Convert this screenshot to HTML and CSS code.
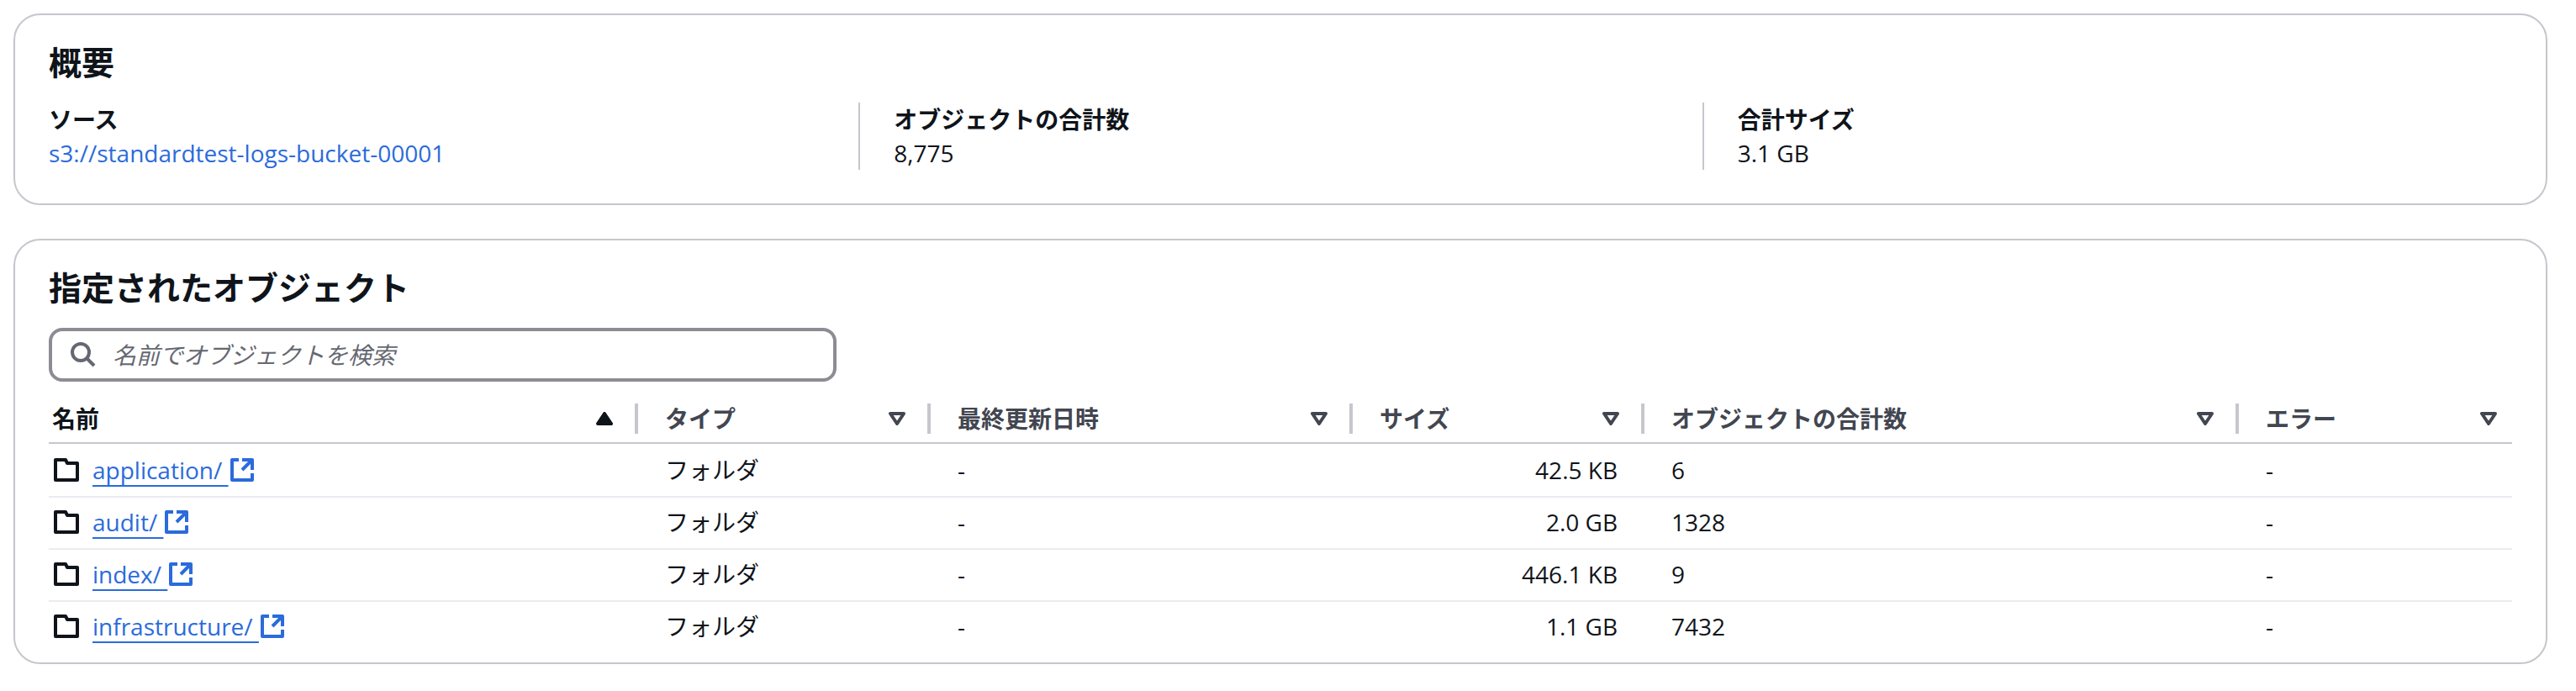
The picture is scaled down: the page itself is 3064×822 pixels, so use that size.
FILE: index.html
```html
<!DOCTYPE html>
<html lang="ja">
<head>
    <meta charset="UTF-8">
    <meta name="viewport" content="width=device-width, initial-scale=1.0">
    <title>概要</title>
    <link rel="stylesheet" href="styles.css">
</head>
<body>
    <!-- Shared icons -->
    <svg class="sprite" aria-hidden="true">
        <symbol id="icon-folder" viewBox="0 0 30 28">
            <path d="M2 2h12l2 4h12v20H2z" fill="none" stroke="currentColor" stroke-width="4" stroke-linejoin="round"/>
        </symbol>
        <symbol id="icon-external" viewBox="0 0 28 28">
            <path d="M10 2H2v24h24v-8M14 2h12v12M26 2L14 14" fill="none" stroke="currentColor" stroke-width="4" stroke-linejoin="round"/>
        </symbol>
        <symbol id="icon-sort" viewBox="0 0 20 16">
            <path d="M2 2h16l-8 12z" fill="none" stroke="currentColor" stroke-width="4" stroke-linejoin="round"/>
        </symbol>
        <symbol id="icon-sorted" viewBox="0 0 20 16">
            <path d="M10 2l8 12H2z" fill="currentColor" stroke="currentColor" stroke-width="4" stroke-linejoin="round"/>
        </symbol>
    </svg>

    <section class="card">
        <h2>概要</h2>
        <dl class="summary">
            <div class="summary-item">
                <dt>ソース</dt>
                <dd><a href="#">s3://standardtest-logs-bucket-00001</a></dd>
            </div>
            <div class="summary-item">
                <dt>オブジェクトの合計数</dt>
                <dd>8,775</dd>
            </div>
            <div class="summary-item">
                <dt>合計サイズ</dt>
                <dd>3.1 GB</dd>
            </div>
        </dl>
    </section>

    <section class="card objects">
        <h2>指定されたオブジェクト</h2>
        <label class="search">
            <svg class="search-icon" viewBox="0 0 30 30" aria-hidden="true">
                <circle cx="12" cy="12" r="10" fill="none" stroke="currentColor" stroke-width="4"/>
                <path d="M19 19l9 9" stroke="currentColor" stroke-width="4"/>
            </svg>
            <input type="text" placeholder="名前でオブジェクトを検索" aria-label="名前でオブジェクトを検索">
        </label>

        <table>
            <colgroup>
                <col class="col-name">
                <col class="col-type">
                <col class="col-modified">
                <col class="col-size">
                <col class="col-count">
                <col class="col-error">
            </colgroup>
            <thead>
                <tr>
                    <th aria-sort="ascending"><div class="head"><button class="sorted">名前<svg class="sort"><use href="#icon-sorted"/></svg></button></div></th>
                    <th><div class="head"><button>タイプ<svg class="sort"><use href="#icon-sort"/></svg></button></div></th>
                    <th><div class="head"><button>最終更新日時<svg class="sort"><use href="#icon-sort"/></svg></button></div></th>
                    <th><div class="head"><button>サイズ<svg class="sort"><use href="#icon-sort"/></svg></button></div></th>
                    <th><div class="head"><button>オブジェクトの合計数<svg class="sort"><use href="#icon-sort"/></svg></button></div></th>
                    <th><div class="head"><button>エラー<svg class="sort"><use href="#icon-sort"/></svg></button></div></th>
                </tr>
            </thead>
            <tbody>
                <tr>
                    <td><div class="name"><svg class="folder"><use href="#icon-folder"/></svg><a href="#"><span>application/&nbsp;</span><svg class="external"><use href="#icon-external"/></svg></a></div></td>
                    <td>フォルダ</td>
                    <td>-</td>
                    <td class="size">42.5 KB</td>
                    <td>6</td>
                    <td>-</td>
                </tr>
                <tr>
                    <td><div class="name"><svg class="folder"><use href="#icon-folder"/></svg><a href="#"><span>audit/&nbsp;</span><svg class="external"><use href="#icon-external"/></svg></a></div></td>
                    <td>フォルダ</td>
                    <td>-</td>
                    <td class="size">2.0 GB</td>
                    <td>1328</td>
                    <td>-</td>
                </tr>
                <tr>
                    <td><div class="name"><svg class="folder"><use href="#icon-folder"/></svg><a href="#"><span>index/&nbsp;</span><svg class="external"><use href="#icon-external"/></svg></a></div></td>
                    <td>フォルダ</td>
                    <td>-</td>
                    <td class="size">446.1 KB</td>
                    <td>9</td>
                    <td>-</td>
                </tr>
                <tr>
                    <td><div class="name"><svg class="folder"><use href="#icon-folder"/></svg><a href="#"><span>infrastructure/&nbsp;</span><svg class="external"><use href="#icon-external"/></svg></a></div></td>
                    <td>フォルダ</td>
                    <td>-</td>
                    <td class="size">1.1 GB</td>
                    <td>7432</td>
                    <td>-</td>
                </tr>
            </tbody>
        </table>
    </section>
</body>
</html>
```
FILE: styles.css
```css
* {
    box-sizing: border-box;
}
body {
    margin: 0;
    padding: 16px 34px 32px 16px;
    font-family: "Open Sans", "Noto Sans CJK JP", sans-serif;
    font-size: 28px;
    line-height: 40px;
    color: #0f141a;
    background: #fff;
}
.sprite {
    display: none;
}
a {
    color: #2b6bdb;
    text-decoration: none;
}
.card {
    padding: 32px 40px 40px;
    border: 2px solid #c6c6cd;
    border-radius: 32px;
    margin-bottom: 40px;
}
.objects {
    padding-bottom: 10px;
    margin-bottom: 0;
}
h2 {
    margin: 0 0 24px;
    font-size: 39px;
    line-height: 48px;
    font-weight: 700;
}

/* Summary */
.summary {
    display: grid;
    grid-template-columns: repeat(3, 1fr);
    gap: 80px;
    margin: 0;
}
.summary-item + .summary-item {
    margin-left: -40px;
    padding-left: 40px;
    border-left: 2px solid #c6c6cd;
}
dt {
    height: 40px;
    font-weight: 700;
}
dd {
    height: 40px;
    margin: 0;
}

/* Search */
.search {
    display: flex;
    align-items: center;
    gap: 20px;
    max-width: 937px;
    height: 64px;
    padding: 0 22px;
    border: 4px solid #8c8c94;
    border-radius: 16px;
    margin-bottom: 14px;
    color: #656871;
}
.search-icon {
    flex: none;
    width: 30px;
    height: 30px;
}
.search input {
    flex: 1;
    min-width: 0;
    padding: 0;
    border: none;
    outline: none;
    background: none;
    font: inherit;
    color: #0f141a;
}
.search input::placeholder {
    color: #656871;
    font-style: italic;
    opacity: 1;
}

/* Table */
table {
    width: 100%;
    table-layout: fixed;
    border-spacing: 0;
}
.col-name {
    width: 701px;
}
.col-type {
    width: 348px;
}
.col-modified {
    width: 502px;
}
.col-size {
    width: 347px;
}
.col-count {
    width: 707px;
}
.col-error {
    width: 325px;
}
th {
    padding: 12px 0 10px 32px;
    border-bottom: 2px solid #c6c6cd;
}
th:first-child {
    padding-left: 4px;
}
.head {
    display: flex;
    align-items: center;
    height: 36px;
    border-right: 4px solid #c6c6cd;
    padding-right: 26px;
}
th:last-child .head {
    border-right: none;
    padding-right: 18px;
}
.head button {
    display: flex;
    flex: 1;
    align-items: center;
    justify-content: space-between;
    padding: 0;
    border: none;
    background: none;
    font: inherit;
    font-weight: 700;
    color: #424650;
    cursor: pointer;
}
.head .sorted {
    color: #0f141a;
}
.sort {
    width: 20px;
    height: 16px;
}
td {
    height: 62px;
    padding: 9px 32px 11px;
    border-bottom: 2px solid #ebebf0;
    line-height: 40px;
}
td:first-child {
    padding-left: 6px;
}
tbody tr:first-child td {
    height: 64px;
    padding-top: 11px;
}
tbody tr:last-child td {
    border-bottom-color: transparent;
}
.size {
    text-align: right;
}
.name {
    display: flex;
    align-items: center;
    gap: 16px;
    height: 40px;
}
.folder {
    width: 30px;
    height: 28px;
}
.name a {
    display: flex;
    align-items: center;
    gap: 2px;
}
.name span {
    text-decoration: underline;
    text-decoration-thickness: 2px;
    text-decoration-skip-ink: none;
    text-underline-offset: 7px;
}
.external {
    width: 28px;
    height: 28px;
}
```
